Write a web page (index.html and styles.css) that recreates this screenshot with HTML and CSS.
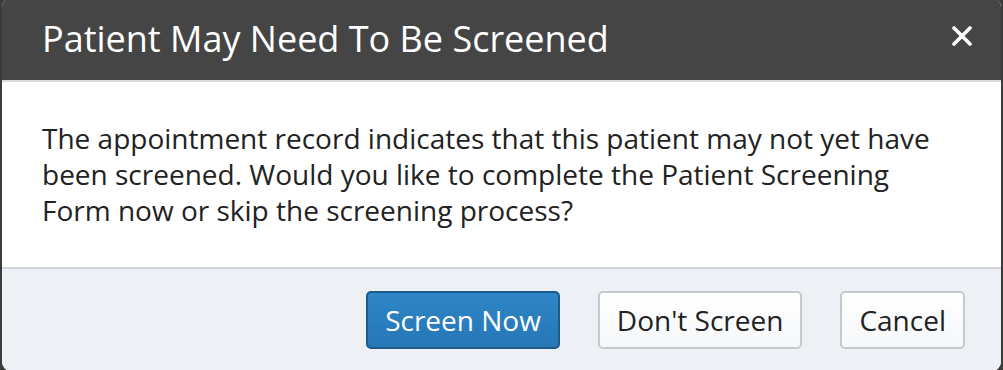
FILE: index.html
```html
<!DOCTYPE html>
<html>
<head>
<meta charset="utf-8">
<link rel="stylesheet" href="styles.css">
</head>
<body>
<div class="dialog">
  <div class="header">
    <h1 class="title">Patient May Need To Be Screened</h1>
    <button class="close" aria-label="Close">
      <svg width="20" height="20" viewBox="0 0 20 20"><path d="M2 2 L18 18 M18 2 L2 18" stroke="#fff" stroke-width="3.6" stroke-linecap="round"/></svg>
    </button>
  </div>
  <div class="body">
    <p class="message">The appointment record indicates that this patient may not yet have been screened. Would you like to complete the Patient Screening Form now or skip the screening process?</p>
  </div>
  <div class="footer">
    <button class="btn btn-primary">Screen Now</button>
    <button class="btn">Don't Screen</button>
    <button class="btn">Cancel</button>
  </div>
</div>
</body>
</html>
```
FILE: styles.css
```css
html, body {
  margin: 0;
  padding: 0;
  background: #3b3b3b;
  height: 370px;
  overflow: hidden;
}
.dialog {
  margin: -2px 2px 0 2px;
  width: 999px;
  border-radius: 9px;
  overflow: hidden;
  font-family: "Open Sans", "DejaVu Sans", sans-serif;
  background: #fff;
}
.header {
  height: 84px;
  box-sizing: border-box;
  background: #454545;
  border-bottom: 2px solid #dadada;
  display: flex;
  align-items: center;
  padding: 0 29px 0 40px;
}
.title {
  flex: 1;
  margin: 0;
  font-weight: 400;
  font-size: 36px;
  line-height: 82px;
  color: #fff;
}
.close {
  background: none;
  border: 0;
  padding: 0;
  width: 20px;
  height: 20px;
  display: flex;
  margin-top: -6px;
}
.body {
  padding: 38px 60px 39px 40px;
  background: #fff;
}
.message {
  margin: 0;
  font-size: 28px;
  line-height: 36px;
  color: #222;
}
.footer {
  border-top: 2px solid #d3d7db;
  background: #edf1f5;
  display: flex;
  justify-content: flex-end;
  gap: 38px;
  padding: 22px 36px 22px 0;
  border-radius: 0 0 9px 9px;
}
.btn {
  font-family: "Open Sans", "DejaVu Sans", sans-serif;
  font-size: 28px;
  height: 58px;
  padding: 0 17px;
  border: 2px solid #c6c9cc;
  border-radius: 5px;
  background: linear-gradient(#ffffff, #f5f7f9);
  color: #222;
}
.btn-primary {
  background: linear-gradient(#2f86c6, #2677b6);
  border-color: #1d5b8a;
  color: #fff;
}
```
